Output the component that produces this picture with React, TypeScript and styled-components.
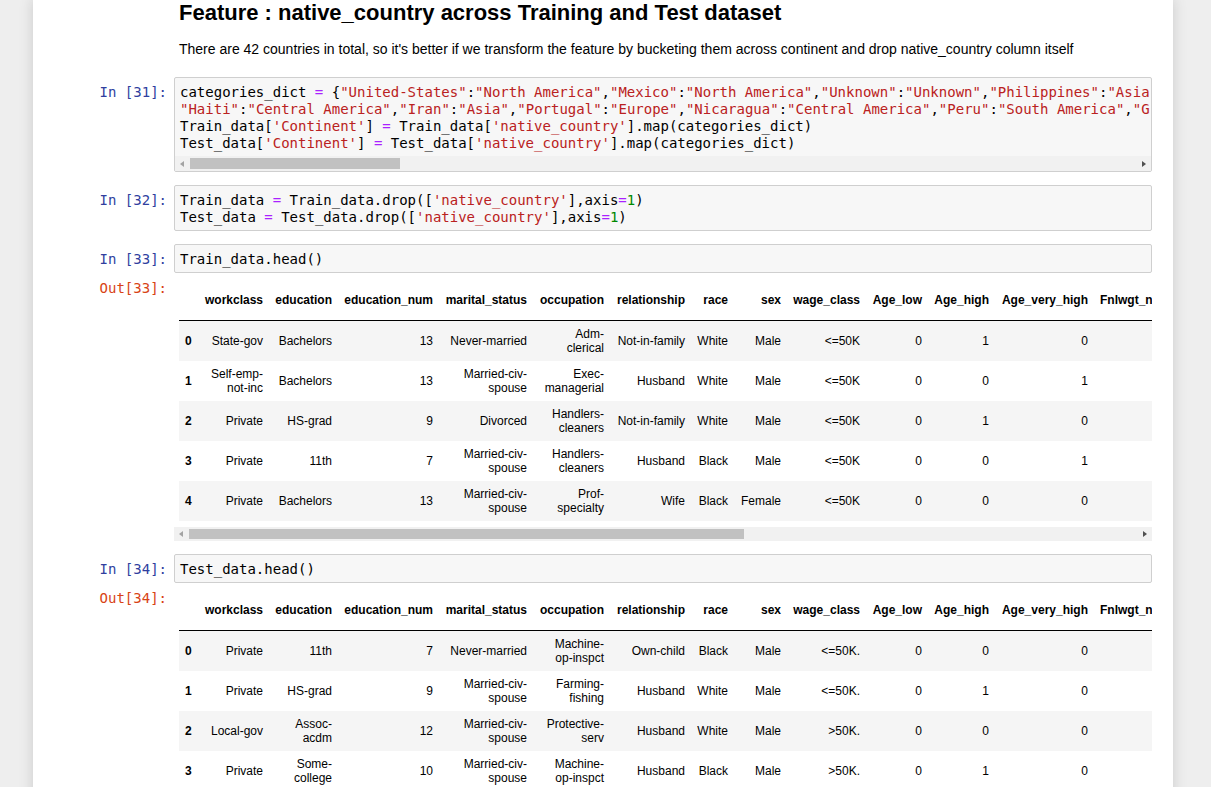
import React from 'react';
import styled, { createGlobalStyle } from 'styled-components';

type Pair = [string, string];

const GlobalStyle = createGlobalStyle`
  html, body {
    margin: 0;
    padding: 0;
    height: 787px;
    overflow: hidden;
    background: #eeeeee;
  }
  body {
    font-family: "Liberation Sans", Arial, sans-serif;
    font-size: 14px;
    color: #000000;
  }
`;

const Notebook = styled.div`
  box-sizing: border-box;
  width: 1140px;
  min-height: 787px;
  margin-left: 33px;
  padding: 0 15px;
  background: #ffffff;
  box-shadow: 0 0 12px 1px rgba(87, 87, 87, 0.2);
  display: flex;
  flex-direction: column;
  gap: 13px;
`;

const Cell = styled.div`
  display: flex;
  flex-direction: column;
  padding: 0 6px 0 5px;
`;

const Row = styled.div`
  display: flex;
  align-items: flex-start;
`;

const Prompt = styled.div<{ $out?: boolean }>`
  box-sizing: border-box;
  flex: none;
  width: 121px;
  padding: 7px 7px 0 0;
  text-align: right;
  font-family: "DejaVu Sans Mono", monospace;
  font-size: 14px;
  line-height: 17px;
  color: ${p => (p.$out ? '#d84315' : '#303f9f')};
`;

const MdBody = styled.div`
  flex: 1;
  padding: 0 5px 5px;
`;

const Heading = styled.h3`
  margin: 0 0 14px;
  font-size: 22px;
  line-height: 25px;
  font-weight: bold;
`;

const Para = styled.p`
  margin: 0;
  line-height: 20px;
`;

const InputArea = styled.div`
  flex: 1;
  min-width: 0;
  border: 1px solid #cfcfcf;
  border-radius: 2px;
  background: #f7f7f7;
  overflow: hidden;
`;

const CodeLines = styled.pre`
  margin: 0;
  padding: 6px 3px 4px 5px;
  overflow: hidden;
  white-space: pre;
  font-family: "DejaVu Sans Mono", monospace;
  font-size: 14px;
  line-height: 17px;
  color: #000000;
`;

const Str = styled.span`
  color: #ba2121;
`;

const Op = styled.span`
  color: #aa22ff;
`;

const Num = styled.span`
  color: #008800;
`;

const Track = styled.div<{ $h: number; $gap?: number }>`
  display: flex;
  align-items: center;
  height: ${p => p.$h}px;
  margin-top: ${p => p.$gap ?? 0}px;
  background: #f1f1f1;
`;

const ArrowBox = styled.div`
  flex: none;
  width: 15px;
  height: 100%;
  display: flex;
  align-items: center;
  justify-content: center;
`;

const Arrow = styled.div<{ $dir: 'left' | 'right' }>`
  width: 0;
  height: 0;
  border-top: 3.5px solid transparent;
  border-bottom: 3.5px solid transparent;
  ${p =>
    p.$dir === 'left'
      ? 'border-right: 4px solid #a3a3a3; margin-left: -2px;'
      : 'border-left: 4px solid #505050; margin-left: 1px;'}
`;

const Lane = styled.div`
  flex: 1;
  height: 100%;
  display: flex;
  align-items: center;
`;

const Thumb = styled.div<{ $w: number; $h: number }>`
  width: ${p => p.$w}px;
  height: ${p => p.$h}px;
  background: #c1c1c1;
`;

const OutputArea = styled.div`
  flex: 1;
  min-width: 0;
  display: flex;
  flex-direction: column;
`;

const TableClip = styled.div`
  margin: 14px 0 0 5px;
  overflow: hidden;
`;

const Frame = styled.table`
  border-collapse: separate;
  border-spacing: 0;
  font-family: "Liberation Sans", Arial, sans-serif;
  font-size: 12px;
  line-height: 14px;
  color: #000000;

  thead th {
    padding: 6px 6px 13px;
    border-bottom: 1px solid #000000;
    text-align: right;
    font-weight: bold;
    vertical-align: bottom;
  }
  tbody th {
    padding: 6px;
    text-align: left;
    font-weight: bold;
  }
  tbody td {
    padding: 6px;
    text-align: right;
    vertical-align: middle;
  }
  tbody tr:nth-child(odd) {
    background: #f5f5f5;
  }
`;

const HeadLabel = styled.div<{ $w?: number }>`
  ${p => (p.$w ? `width: ${p.$w}px;` : '')}
  white-space: nowrap;
`;

const Scrollbar: React.FC<{ height: number; thumb: number; gap?: number }> = ({ height, thumb, gap }) => (
  <Track $h={height} $gap={gap}>
    <ArrowBox>
      <Arrow $dir="left" />
    </ArrowBox>
    <Lane>
      <Thumb $w={thumb} $h={height - 4} />
    </Lane>
    <ArrowBox>
      <Arrow $dir="right" />
    </ArrowBox>
  </Track>
);

const Dict: React.FC<{ pairs: Pair[] }> = ({ pairs }) => (
  <>
    {pairs.map(([k, v], i) => (
      <React.Fragment key={k}>
        {i > 0 && ','}
        <Str>"{k}"</Str>:<Str>"{v}"</Str>
      </React.Fragment>
    ))}
  </>
);

const line1: Pair[] = [
  ['United-States', 'North America'],
  ['Mexico', 'North America'],
  ['Unknown', 'Unknown'],
  ['Philippines', 'Asia'],
  ['Germany', 'Europe'],
  ['Puerto-Rico', 'Central America'],
  ['Canada', 'North America'],
];

const line2: Pair[] = [
  ['Haiti', 'Central America'],
  ['Iran', 'Asia'],
  ['Portugal', 'Europe'],
  ['Nicaragua', 'Central America'],
  ['Peru', 'South America'],
  ['Greece', 'Europe'],
  ['France', 'Europe'],
];

// column content widths (padding excluded), index column first
const labelWidths = [8, 58, 57, 89, 82, 65, 69, 31, 41, 67, 50, 55, 87];

const columns = [
  'workclass',
  'education',
  'education_num',
  'marital_status',
  'occupation',
  'relationship',
  'race',
  'sex',
  'wage_class',
  'Age_low',
  'Age_high',
  'Age_very_high',
  'Fnlwgt_normal',
  'Fnlwgt_high',
  'Continent',
];

const trainRows: string[][] = [
  ['State-gov', 'Bachelors', '13', 'Never-married', 'Adm-clerical', 'Not-in-family', 'White', 'Male', '<=50K', '0', '1', '0', '1', '0', 'North America'],
  ['Self-emp-not-inc', 'Bachelors', '13', 'Married-civ-spouse', 'Exec-managerial', 'Husband', 'White', 'Male', '<=50K', '0', '0', '1', '1', '0', 'North America'],
  ['Private', 'HS-grad', '9', 'Divorced', 'Handlers-cleaners', 'Not-in-family', 'White', 'Male', '<=50K', '0', '1', '0', '0', '1', 'North America'],
  ['Private', '11th', '7', 'Married-civ-spouse', 'Handlers-cleaners', 'Husband', 'Black', 'Male', '<=50K', '0', '0', '1', '0', '1', 'North America'],
  ['Private', 'Bachelors', '13', 'Married-civ-spouse', 'Prof-specialty', 'Wife', 'Black', 'Female', '<=50K', '0', '0', '0', '0', '1', 'Central America'],
];

const testRows: string[][] = [
  ['Private', '11th', '7', 'Never-married', 'Machine-op-inspct', 'Own-child', 'Black', 'Male', '<=50K.', '0', '0', '0', '1', '0', 'North America'],
  ['Private', 'HS-grad', '9', 'Married-civ-spouse', 'Farming-fishing', 'Husband', 'White', 'Male', '<=50K.', '0', '1', '0', '1', '0', 'North America'],
  ['Local-gov', 'Assoc-acdm', '12', 'Married-civ-spouse', 'Protective-serv', 'Husband', 'White', 'Male', '>50K.', '0', '0', '0', '0', '1', 'North America'],
  ['Private', 'Some-college', '10', 'Married-civ-spouse', 'Machine-op-inspct', 'Husband', 'Black', 'Male', '>50K.', '0', '1', '0', '1', '0', 'North America'],
  ['Unknown', 'Some-college', '10', 'Never-married', 'Unknown', 'Own-child', 'White', 'Female', '<=50K.', '1', '0', '0', '1', '0', 'North America'],
];

const DataFrame: React.FC<{ rows: string[][] }> = ({ rows }) => (
  <TableClip>
    <Frame>
      <thead>
        <tr>
          <th>
            <HeadLabel $w={labelWidths[0]} />
          </th>
          {columns.map((c, i) => (
            <th key={c}>
              <HeadLabel $w={labelWidths[i + 1]}>{c}</HeadLabel>
            </th>
          ))}
        </tr>
      </thead>
      <tbody>
        {rows.map((r, i) => (
          <tr key={i}>
            <th>{i}</th>
            {r.map((v, j) => (
              <td key={j}>{v}</td>
            ))}
          </tr>
        ))}
      </tbody>
    </Frame>
  </TableClip>
);

const App: React.FC = () => (
  <>
    <GlobalStyle />
    <Notebook>
      <Cell>
        <Row>
          <Prompt />
          <MdBody>
            <Heading>Feature : native_country across Training and Test dataset</Heading>
            <Para>
              There are 42 countries in total, so it's better if we transform the feature by bucketing them across
              continent and drop native_country column itself
            </Para>
          </MdBody>
        </Row>
      </Cell>

      <Cell>
        <Row>
          <Prompt>In [31]:</Prompt>
          <InputArea>
            <CodeLines>
              categories_dict <Op>=</Op> {'{'}
              <Dict pairs={line1} />,{'\n'}
              <Dict pairs={line2} />,{'\n'}
              Train_data[<Str>'Continent'</Str>] <Op>=</Op> Train_data[<Str>'native_country'</Str>].map(categories_dict)
              {'\n'}
              Test_data[<Str>'Continent'</Str>] <Op>=</Op> Test_data[<Str>'native_country'</Str>].map(categories_dict)
            </CodeLines>
            <Scrollbar height={15} thumb={210} />
          </InputArea>
        </Row>
      </Cell>

      <Cell>
        <Row>
          <Prompt>In [32]:</Prompt>
          <InputArea>
            <CodeLines>
              Train_data <Op>=</Op> Train_data.drop([<Str>'native_country'</Str>],axis<Op>=</Op>
              <Num>1</Num>){'\n'}
              Test_data <Op>=</Op> Test_data.drop([<Str>'native_country'</Str>],axis<Op>=</Op>
              <Num>1</Num>)
            </CodeLines>
          </InputArea>
        </Row>
      </Cell>

      <Cell>
        <Row>
          <Prompt>In [33]:</Prompt>
          <InputArea>
            <CodeLines>Train_data.head()</CodeLines>
          </InputArea>
        </Row>
        <Row>
          <Prompt $out>Out[33]:</Prompt>
          <OutputArea>
            <DataFrame rows={trainRows} />
            <Scrollbar height={14} thumb={555} gap={6} />
          </OutputArea>
        </Row>
      </Cell>

      <Cell>
        <Row>
          <Prompt>In [34]:</Prompt>
          <InputArea>
            <CodeLines>Test_data.head()</CodeLines>
          </InputArea>
        </Row>
        <Row>
          <Prompt $out>Out[34]:</Prompt>
          <OutputArea>
            <DataFrame rows={testRows} />
            <Scrollbar height={14} thumb={555} gap={6} />
          </OutputArea>
        </Row>
      </Cell>
    </Notebook>
  </>
);

export default App;
